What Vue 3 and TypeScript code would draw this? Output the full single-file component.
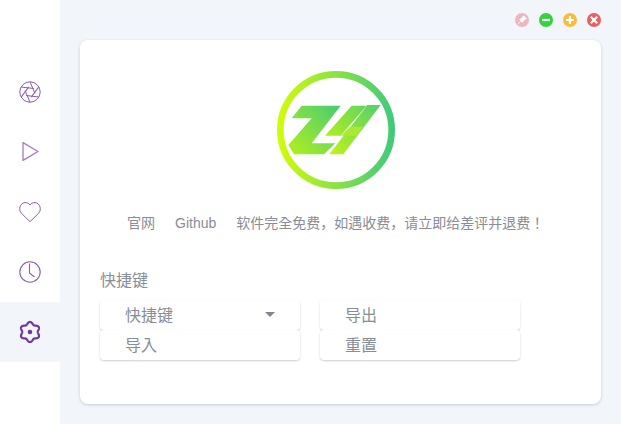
<script setup lang="ts">
import { computed } from 'vue'

const blades = [0, 60, 120, 180, 240, 300]

const gearPath = computed(() => {
  const pts: string[] = []
  for (let i = 0; i < 180; i++) {
    const t = (i / 180) * Math.PI * 2
    const r = 8.9 + 1.15 * Math.cos(6 * t)
    const x = 12 + r * Math.sin(t)
    const y = 12 - r * Math.cos(t)
    pts.push(`${x.toFixed(2)} ${y.toFixed(2)}`)
  }
  return `M${pts.join(' L')} Z`
})
</script>

<template>
  <div class="app">
    <nav class="side">
      <div class="nav-item">
        <svg width="24" height="24" viewBox="0 0 24 24" fill="none" stroke="#8d5fa6" stroke-width="1">
          <circle cx="12" cy="12" r="10.2" />
          <g v-for="a in blades" :key="a" :transform="`rotate(${a} 12 12)`">
            <path d="M12 1.8 L17 13.5" />
          </g>
        </svg>
      </div>
      <div class="nav-item">
        <svg width="24" height="24" viewBox="0 0 24 24" fill="none" stroke="#a67cbb" stroke-width="1.3">
          <path d="M5 2.6 V20.4 L20 11.5 Z" stroke-linejoin="round" />
        </svg>
      </div>
      <div class="nav-item">
        <svg width="24" height="24" viewBox="0 0 24 24" fill="none" stroke="#8d5fa6" stroke-width="1">
          <path d="M12 21.7 L3.2 13 C0.4 10 1.6 3 7 2.6 C9.2 2.5 11 3.5 12 5 C13 3.5 14.8 2.5 17 2.6 C22.4 3 23.6 10 20.8 13 Z" stroke-linejoin="round" />
        </svg>
      </div>
      <div class="nav-item">
        <svg width="24" height="24" viewBox="0 0 24 24" fill="none" stroke="#8d5fa6" stroke-width="1.1">
          <circle cx="12" cy="12" r="10.2" />
          <path d="M11.5 3.5 V13 L16.5 17" />
        </svg>
      </div>
      <div class="nav-item active">
        <svg width="24" height="24" viewBox="0 0 24 24" fill="none" stroke="#6f3a9e" stroke-width="2.2">
          <path :d="gearPath" stroke-linejoin="round" />
          <circle cx="12" cy="12" r="2.3" fill="#6f3a9e" stroke="none" />
        </svg>
      </div>
    </nav>

    <main class="main">
      <div class="window-controls">
        <span class="dot pin">
          <svg width="12" height="12" viewBox="0 0 12 12"><path d="M7.4 1.8 L10.2 4.6 L8.4 5.4 L6.4 8.2 L3.8 5.6 L6.6 3.6 Z M4.6 7.4 L2 10" fill="#fff" stroke="#fff" stroke-width="1" /></svg>
        </span>
        <span class="dot min">
          <svg width="12" height="12" viewBox="0 0 12 12"><path d="M2 6 H10" stroke="#fff" stroke-width="2.2" /></svg>
        </span>
        <span class="dot max">
          <svg width="12" height="12" viewBox="0 0 12 12"><path d="M2 6 H10 M6 2 V10" stroke="#fff" stroke-width="2.2" /></svg>
        </span>
        <span class="dot close">
          <svg width="12" height="12" viewBox="0 0 12 12"><path d="M2.8 2.8 L9.2 9.2 M9.2 2.8 L2.8 9.2" stroke="#fff" stroke-width="2.2" /></svg>
        </span>
      </div>

      <section class="card">
        <div class="logo">
          <svg width="132" height="132" viewBox="0 0 396 396">
            <defs>
              <linearGradient id="ring" gradientUnits="userSpaceOnUse" x1="20" y1="0" x2="376" y2="0">
                <stop offset="0" stop-color="#d4fc08" />
                <stop offset="1" stop-color="#3ec97e" />
              </linearGradient>
              <linearGradient id="zed" gradientUnits="userSpaceOnUse" x1="55" y1="268" x2="212" y2="122">
                <stop offset="0" stop-color="#b4f01e" />
                <stop offset="1" stop-color="#46cc72" />
              </linearGradient>
              <linearGradient id="why" gradientUnits="userSpaceOnUse" x1="165" y1="268" x2="330" y2="120">
                <stop offset="0" stop-color="#c6f511" />
                <stop offset="1" stop-color="#52d06a" />
              </linearGradient>
            </defs>
            <circle cx="198" cy="195" r="167" fill="none" stroke="url(#ring)" stroke-width="20" />
            <path fill="url(#zed)" d="M95 122 H212 L125 235 H196 L162 268 H72 L55 240 L125 160 H65 Z" />
            <path fill="url(#why)" d="M245 122 H290 L212 212 H165 Z" />
            <path fill="url(#why)" d="M292 120 H332 L220 268 H178 Z" />
            <path fill="#a8ea34" d="M240 185 H278 L262 212 H213 Z" />
          </svg>
        </div>
        <div class="links">
          <a>官网</a>
          <a>Github</a>
          <span>软件完全免费，如遇收费，请立即给差评并退费！</span>
        </div>
        <div class="section-title">快捷键</div>
        <div class="buttons">
          <div class="btn select">
            <span>快捷键</span>
            <i class="caret"></i>
          </div>
          <div class="btn">导出</div>
          <div class="btn">导入</div>
          <div class="btn">重置</div>
        </div>
      </section>
    </main>
  </div>
</template>

<style>
html, body { margin: 0; padding: 0; }
</style>

<style scoped>
.app {
  display: flex;
  width: 621px;
  height: 424px;
  overflow: hidden;
  background: #f2f5f9;
  font-family: "Liberation Sans", "Noto Sans CJK KR", sans-serif;
  color: #888d97;
}
.side {
  width: 60px;
  flex: none;
  background: #fff;
  padding-top: 62px;
  box-sizing: border-box;
}
.nav-item {
  height: 60px;
  display: flex;
  align-items: center;
  justify-content: center;
}
.nav-item.active { background: #f2f5f9; }
.main {
  flex: 1;
  min-width: 0;
  padding: 0 20px 20px;
  display: flex;
  flex-direction: column;
}
.window-controls {
  height: 40px;
  flex: none;
  display: flex;
  justify-content: flex-end;
  align-items: flex-start;
  gap: 10px;
  padding-top: 13px;
  box-sizing: border-box;
}
.dot {
  width: 14px;
  height: 14px;
  border-radius: 50%;
  display: flex;
  align-items: center;
  justify-content: center;
}
.pin { background: #ecb8bd; }
.min { background: #33d43c; }
.max { background: #fbbc3c; }
.close { background: #ec5f5f; }
.card {
  flex: 1;
  background: #fff;
  border-radius: 8px;
  box-shadow: 0 1px 3px rgba(120, 130, 150, 0.35);
  padding: 25px 20px 0;
  box-sizing: border-box;
}
.logo {
  height: 132px;
  margin-left: 170px;
}
.logo svg { display: block; }
.links {
  margin-top: 16px;
  padding-left: 27px;
  display: flex;
  gap: 20px;
  font-size: 14px;
  line-height: 20px;
}
.section-title {
  margin-top: 37px;
  font-size: 16px;
  line-height: 22px;
}
.buttons {
  margin-top: 8px;
  display: grid;
  grid-template-columns: 200px 200px;
  column-gap: 20px;
  grid-auto-rows: 30px;
}
.btn {
  border-radius: 4px;
  box-shadow: 0 1px 2px rgba(120, 130, 150, 0.4);
  padding: 0 25px 2px;
  box-sizing: border-box;
  display: flex;
  align-items: center;
  justify-content: space-between;
  font-size: 16px;
  background: #fff;
}
.caret {
  width: 0;
  height: 0;
  border-left: 5px solid transparent;
  border-right: 5px solid transparent;
  border-top: 5px solid #80858f;
}
</style>
